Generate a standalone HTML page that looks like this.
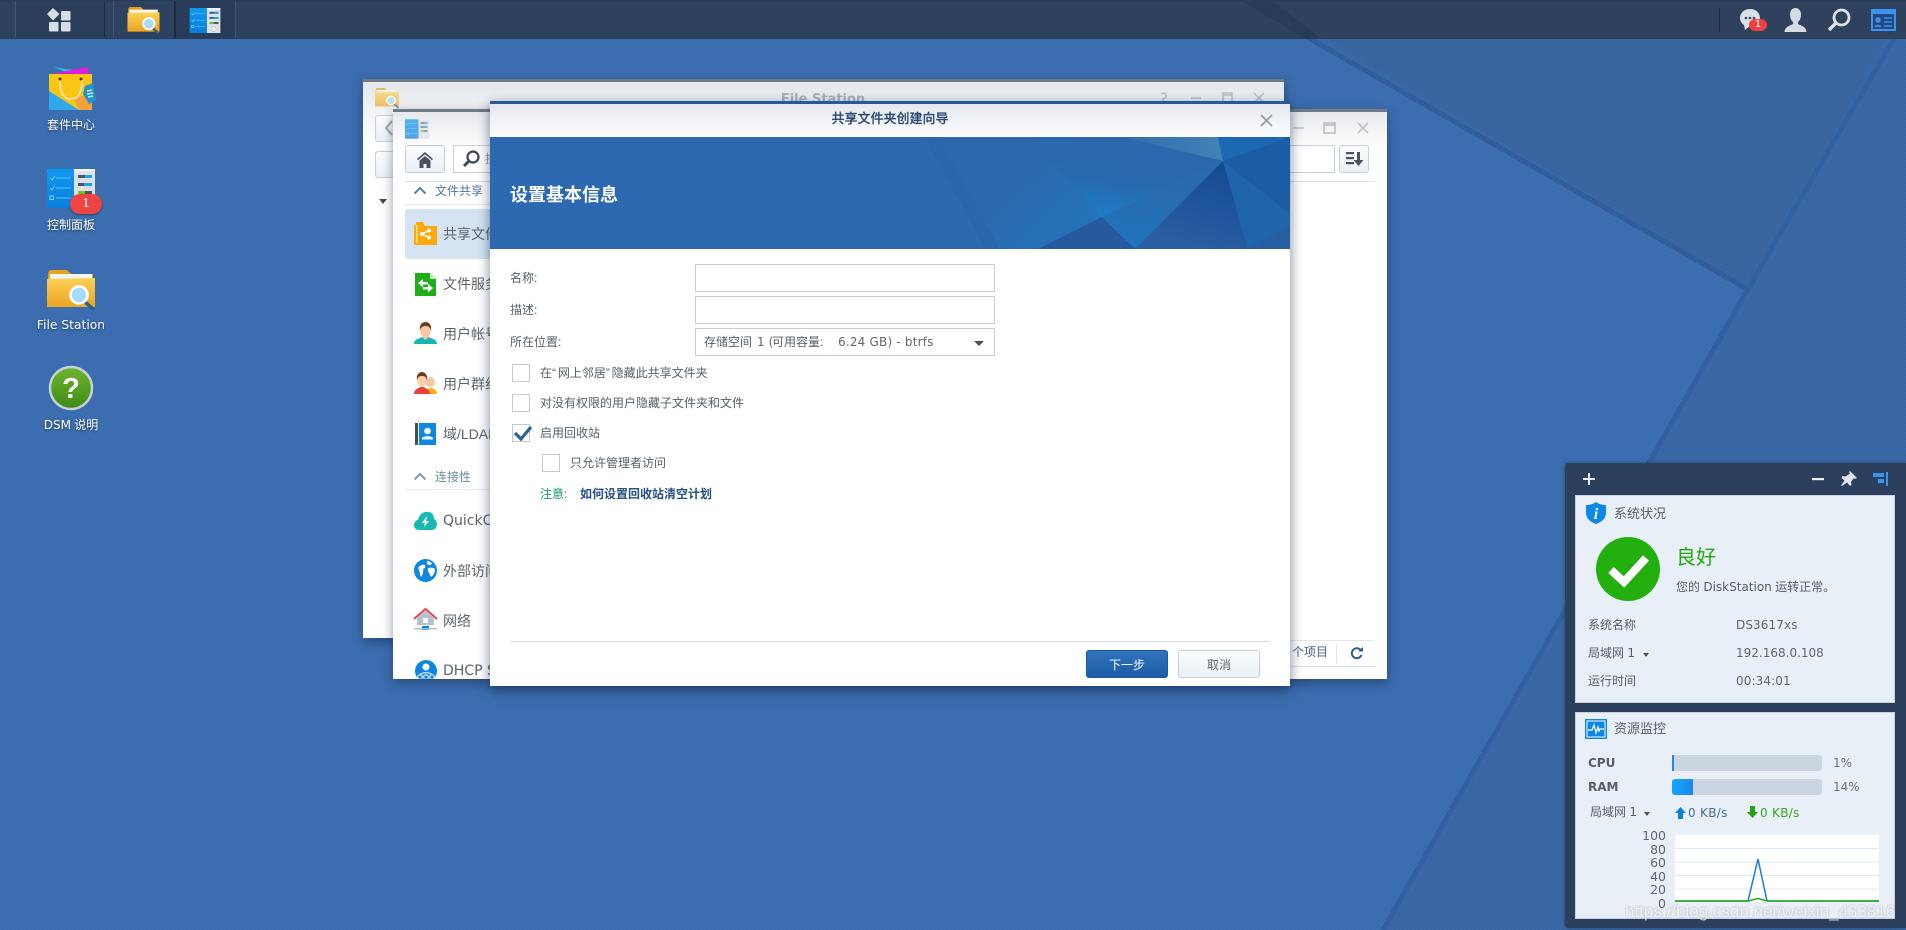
<!DOCTYPE html>
<html lang="zh"><head><meta charset="utf-8"><title>DSM</title>
<style>
html,body{margin:0;padding:0;width:1906px;height:930px;overflow:hidden;background:#3c6fb1}
body{position:relative;font-family:"DejaVu Sans","Noto Sans CJK SC",sans-serif;font-size:12px;color:#555e68}
.a{position:absolute}
.t{position:absolute;white-space:nowrap;line-height:16px;height:16px}
.zh{font-family:"Liberation Sans","Noto Sans CJK SC",sans-serif}
.d{color:#fff;width:120px;text-align:center;text-shadow:0 1px 2px rgba(0,0,0,.5);left:11px}
.win{position:absolute;background:#fff;overflow:hidden;box-shadow:0 4px 10px rgba(10,30,60,.45)}
.inp{position:absolute;box-sizing:border-box;border:1px solid #c5cedb;background:#fff}
.cb{position:absolute;box-sizing:border-box;width:18px;height:18px;border:1px solid #c3c9d2;background:#fff}
.btn{position:absolute;box-sizing:border-box;border:1px solid #c6d0db;border-radius:3px;background:linear-gradient(#fafcfd,#eaf0f5)}
.side{font-size:14px;color:#5c636b}
.v{font-family:"DejaVu Sans",sans-serif;font-size:12px;letter-spacing:.1px;color:#5f6772}
svg{position:absolute;overflow:visible}
</style></head><body>

<!-- wallpaper -->
<svg class="a" style="left:0;top:0" width="1906" height="930" viewBox="0 0 1906 930">
<rect width="1906" height="930" fill="#3c6fb1"/>
<polygon points="1240,0 1906,0 1906,930 1380,930 1747,287" fill="#3a69a8"/>
<polygon points="1262,0 1905,0 1751,290" fill="#3a66a3"/>
<polyline points="1242,0 1747,289" fill="none" stroke="#315e9c" stroke-width="5"/>
<polyline points="1899,30 1749,287 1383,930" fill="none" stroke="#3261a3" stroke-width="5"/>
</svg>
<div class="a" style="left:0;top:0;width:1906px;height:930px;background:repeating-conic-gradient(rgba(0,0,0,.025) 0 25%,transparent 0 50%) 0 0/4px 4px"></div>

<!-- taskbar -->
<div class="a" style="left:0;top:0;width:1906px;height:39px;background:linear-gradient(#263a56 0,#2e425e 6%,#2e425e 100%);border-bottom:1px solid #2a3e5a;box-sizing:border-box"></div>
<svg class="a" style="left:0;top:0" width="1906" height="39"><polygon points="1240,0 1272,0 1320,38 1304,38" fill="#293c57"/></svg>
<div class="a" style="left:15px;top:1px;width:88px;height:37px;background:#2b3f5b;border-left:1px solid #46586f;border-right:1px solid #1c2b40"></div>
<div class="a" style="left:113px;top:1px;width:60px;height:37px;background:#2d4260;border-left:1px solid #46586f;border-right:1px solid #1c2b40"></div>
<div class="a" style="left:175px;top:1px;width:59px;height:37px;background:#283b58;border-left:1px solid #1c2b40;border-right:1px solid #46586f"></div>
<div class="a" style="left:1719px;top:8px;width:1px;height:24px;background:#1d2d44"></div>

<svg width="0" height="0" style="position:absolute">
<defs>
<linearGradient id="gf" x1="0" y1="0" x2="0" y2="1"><stop offset="0" stop-color="#fcd156"/><stop offset="1" stop-color="#eda423"/></linearGradient>
<linearGradient id="gb" x1="0" y1="0" x2="0" y2="1"><stop offset="0" stop-color="#1097ee"/><stop offset="1" stop-color="#0a80dc"/></linearGradient>
<linearGradient id="gg" x1="0" y1="0" x2="0" y2="1"><stop offset="0" stop-color="#6db52e"/><stop offset="1" stop-color="#3f8a17"/></linearGradient>
<linearGradient id="g1" gradientUnits="userSpaceOnUse" x1="1040" y1="150" x2="1102" y2="217"><stop offset="0" stop-color="#2c68ae"/><stop offset="1" stop-color="#2474bb"/></linearGradient>
<linearGradient id="g2" gradientUnits="userSpaceOnUse" x1="1120" y1="140" x2="1108" y2="215"><stop offset="0" stop-color="#2b67ad"/><stop offset=".55" stop-color="#2769b0"/><stop offset="1" stop-color="#1e7cc4"/></linearGradient>
<linearGradient id="g3" gradientUnits="userSpaceOnUse" x1="1150" y1="185" x2="1135" y2="249"><stop offset="0" stop-color="#2a6bb0"/><stop offset="1" stop-color="#1f74bd"/></linearGradient>
<linearGradient id="g4" gradientUnits="userSpaceOnUse" x1="1223" y1="161" x2="1200" y2="249"><stop offset="0" stop-color="#144a90"/><stop offset="1" stop-color="#2a5ea3"/></linearGradient>
<linearGradient id="g5" gradientUnits="userSpaceOnUse" x1="1123" y1="137" x2="1218" y2="150"><stop offset="0" stop-color="#2f6eae"/><stop offset="1" stop-color="#4181b6"/></linearGradient>
<symbol id="fold" viewBox="0 0 48 42">
<path d="M1 6Q1 0 4 0H20L24 4H46V12H1Z" fill="#e7a21f"/>
<rect x="3" y="4" width="42" height="7" fill="#f4f3ee"/>
<path d="M0 9L48 8V37H0Z" fill="url(#gf)"/>
<line x1="37" y1="31" x2="47" y2="40" stroke="#2f6088" stroke-width="3.500"/>
<circle cx="32" cy="25" r="8.500" fill="#a5dbff" stroke="#fff" stroke-width="2.600"/>
</symbol>
<symbol id="cp" viewBox="0 0 48 39">
<rect width="27" height="39" fill="url(#gb)"/>
<rect x="27" width="21" height="39" fill="#dde2e8"/><rect x="27" width="21" height="2" fill="#f4f6f8"/>
<g stroke="#5cc2ff" stroke-width="1"><path d="M9 9H24M9 19H24M9 29H24"/></g>
<rect x="3" y="27" width="3.500" height="3.500" fill="none" stroke="#7dd0ff"/>
<path d="M3 9l2 2 3-4M3 19l2 2 3-4" fill="none" stroke="#7dd0ff"/>
<rect x="31" y="6" width="14" height="3" fill="#4d5560"/><rect x="38" y="6" width="7" height="3" fill="#1ba7e8"/>
<rect x="31" y="14" width="14" height="3" fill="#4d5560"/><rect x="37" y="14" width="8" height="3" fill="#1ba7e8"/>
<rect x="31" y="22" width="14" height="3" fill="#4d5560"/><rect x="31" y="22" width="7" height="3" fill="#6cc61a"/>
<circle cx="37.500" cy="33" r="4" fill="#f1f3f5" stroke="#b6bdc6"/>
</symbol>
</defs>
</svg>

<!-- taskbar icons -->
<svg style="left:47px;top:8px" width="24" height="24" viewBox="0 0 24 24" fill="#d7dde5">
<polygon points="6,0 12.500,6 6,12.500 0,6"/><rect x="14" y="3" width="9.500" height="9.500" rx="1"/><rect x="2" y="14" width="9.500" height="9.500" rx="1"/><rect x="14" y="14" width="9.500" height="9.500" rx="1"/>
</svg>
<svg style="left:127px;top:7px" width="33" height="28"><use href="#fold" width="33" height="28"/></svg>
<svg style="left:189px;top:8px" width="32" height="25"><use href="#cp" width="32" height="25"/></svg>

<!-- tray -->
<svg style="left:1739px;top:8px" width="24" height="24" viewBox="0 0 24 24">
<path d="M11 1C5 1 1 5 1 10c0 3 2 6 4 7l1 5 5-4c6 0 10-4 10-8 0-5-4-9-10-9z" fill="#d9e0e8"/>
<circle cx="7" cy="10" r="1.300" fill="#33465f"/><circle cx="11" cy="10" r="1.300" fill="#33465f"/><circle cx="15" cy="10" r="1.300" fill="#33465f"/>
</svg>
<div class="a" style="left:1749px;top:19px;width:18px;height:12px;background:#ef3f3f;border-radius:6px;color:#fff;font-size:10px;line-height:12px;text-align:center">1</div>
<svg style="left:1784px;top:8px" width="23" height="24" viewBox="0 0 23 24"><path d="M11.500 0c3.500 0 5.500 3 5.500 6.500 0 3-1 6-3 7.500v2c2 1.500 8 2 8.500 8H.5c.5-6 6.500-6.500 8.500-8v-2c-2-1.500-3-4.500-3-7.500C6 3 8 0 11.500 0z" fill="#d5dbe3"/></svg>
<svg style="left:1827px;top:8px" width="24" height="24" viewBox="0 0 24 24" fill="none"><circle cx="14.500" cy="9.500" r="7.500" stroke="#dde3ea" stroke-width="2.800"/><line x1="8.500" y1="15.500" x2="2" y2="22" stroke="#dde3ea" stroke-width="3.400"/></svg>
<svg style="left:1871px;top:9px" width="25" height="22" viewBox="0 0 25 22"><rect x="1" y="1" width="23" height="20" fill="#24497d" stroke="#3c92ef" stroke-width="2"/><rect x="1" y="1" width="23" height="4" fill="#3c92ef"/><circle cx="7" cy="11" r="2.800" fill="#3c92ef"/><path d="M3.500 18c0-3 7-3 7 0z" fill="#3c92ef"/><path d="M13 9h8M13 13h8M13 17h8" stroke="#3c92ef" stroke-width="1.500"/></svg>

<!-- desktop icons -->
<svg style="left:49px;top:66px" width="46" height="46" viewBox="0 0 46 46">
<path d="M5 1l11 2 15 2-8 4z" fill="#23c3e8"/>
<polygon points="6,7 39,1 40,8 12,11" fill="#dd1ee0"/>
<polygon points="0,8 43,8 43,44 0,44" fill="#f9c612"/>
<polygon points="0,25 30,44 0,44" fill="#2fa8ee"/>
<polygon points="24,32 43,28 43,44 30,44" fill="#f0a23c"/>
<path d="M11 14c0 14 4 19 11 19s11-5 11-19" fill="none" stroke="#f4dfa4" stroke-width="2"/>
<circle cx="11" cy="13" r="1.500" fill="#4b3a10"/><circle cx="32" cy="13" r="1.500" fill="#4b3a10"/>
<polygon points="36,20 44,17 47,34 40,38 34,28" fill="#2295c6"/>
<path d="M38 25l5-1M38 28l6-1M39 31l5-1" stroke="#e5f6fc" stroke-width="1.300"/>
</svg>
<div class="t d zh" style="top:117px;font-size:12px">套件中心</div>
<svg style="left:47px;top:169px" width="48" height="39"><use href="#cp" width="48" height="39"/></svg>
<div class="a" style="left:70px;top:194px;width:32px;height:20px;border-radius:10px;background:#ef4444;color:#fff;text-align:center;font:14px/20px 'Liberation Serif',serif;box-shadow:0 1px 2px rgba(0,0,0,.4)">1</div>
<div class="t d zh" style="top:217px">控制面板</div>
<svg style="left:47px;top:270px" width="48" height="42"><use href="#fold" width="48" height="42"/></svg>
<div class="t d" style="top:317px;font-size:12.300px">File Station</div>
<svg style="left:49px;top:366px" width="44" height="44" viewBox="0 0 44 44"><circle cx="22" cy="22" r="21" fill="url(#gg)" stroke="#c9d0d6" stroke-width="2.500"/><text x="22" y="32" text-anchor="middle" font-family="Liberation Sans,sans-serif" font-weight="700" font-size="29" fill="#fff">?</text></svg>
<div class="t d zh" style="top:417px"><span style="font-family:'DejaVu Sans'">DSM</span> 说明</div>

<!-- File Station window -->
<div class="win" style="left:363px;top:79px;width:921px;height:559px">
<div class="a" style="left:0;top:0;width:921px;height:3px;background:#707b89"></div>
<div class="a" style="left:0;top:3px;width:921px;height:60px;background:linear-gradient(#e4e7eb,#fff)"></div>
<svg style="left:12px;top:9px" width="24" height="21" opacity=".65"><use href="#fold" width="24" height="21"/></svg>
<div class="t" style="left:340px;width:240px;text-align:center;top:13px;font-weight:700;font-size:13px;color:#aab0b6">File Station</div>
<div class="btn" style="left:12px;top:36px;width:30px;height:27px"></div>
<svg style="left:22px;top:41px" width="10" height="16" fill="none"><path d="M7 1L1 8l6 7" stroke="#a0a6ae" stroke-width="2"/></svg>
<div class="btn" style="left:12px;top:72px;width:30px;height:27px"></div>
<div class="a" style="left:16px;top:120px;border:4px solid transparent;border-top:5px solid #444c55"></div>
<svg style="left:788px;top:11px" width="120" height="16" fill="none" stroke="#b8bdc4" stroke-width="1.500">
<path d="M10 4c3-2 6 0 5 3l-3 2v2"/><path d="M40 8h10"/><path d="M72 3h9v10h-9zM72 5h9"/><path d="M103 3l10 10M113 3l-10 10"/></svg>
</div>

<!-- Control panel window -->
<div class="win" style="left:393px;top:109px;width:994px;height:570px">
<div class="a" style="left:0;top:0;width:994px;height:3px;background:#707a86"></div>
<div class="a" style="left:0;top:3px;width:994px;height:36px;background:linear-gradient(#e6e9ed,#fff)"></div>
<svg style="left:12px;top:10px" width="24" height="20" opacity=".7"><use href="#cp" width="24" height="20"/></svg>
<svg style="left:890px;top:11px" width="90" height="16" fill="none" stroke="#b8bdc4" stroke-width="1.500">
<path d="M10 8h11"/><path d="M41 3h11v10h-11zM41 5h11"/><path d="M75 3l10 10M85 3l-10 10"/></svg>
<div class="btn" style="left:12px;top:36px;width:40px;height:28px;border-color:#c3ccd6"></div>
<svg style="left:24px;top:43px" width="16" height="16" viewBox="0 0 16 16" fill="#4a535d"><path d="M8 0L0 7l1 1.200L8 2.200l7 6 1-1.200zM2.500 8.500V16H6.500v-4h3v4h4V8.500L8 4z"/></svg>
<div class="a" style="left:60px;top:36px;width:882px;height:28px;box-sizing:border-box;border:1px solid #c8d0da"></div>
<svg style="left:69px;top:41px" width="18" height="18" fill="none" stroke="#3e4853"><circle cx="11" cy="7" r="5.500" stroke-width="2.200"/><line x1="7" y1="11" x2="2" y2="16" stroke-width="3"/></svg>
<div class="t zh" style="left:92px;top:42px;color:#99a">搜索</div>
<div class="btn" style="left:946px;top:36px;width:30px;height:28px"></div>
<svg style="left:953px;top:42px" width="18" height="16" fill="#4a535d"><rect y="1" width="8" height="2.200"/><rect y="6" width="8" height="2.200"/><rect y="11" width="8" height="2.200"/><path d="M11 1h3v8h3.500l-5 6-5-6H11z"/></svg>
<div class="a" style="left:12px;top:72px;width:970px;height:1px;background:#dbe2ea"></div>
<div class="a" style="left:12px;top:95px;width:380px;height:1px;background:#e5eaf0"></div>
<svg style="left:20px;top:77px" width="14" height="9" fill="none"><path d="M1.500 7.500L7 2l5.500 5.500" stroke="#5f7f9d" stroke-width="2"/></svg>
<div class="t zh" style="left:42px;top:74px;color:#54779a">文件共享</div>
<div class="a" style="left:12px;top:100px;width:180px;height:50px;border-radius:3px;background:#d5e3f3"></div>
<div class="t side zh" style="left:50px;top:117px">共享文件夹</div>
<svg style="left:21px;top:113px" width="23" height="23" viewBox="0 0 23 23"><path d="M0 3V23H23V4H11L9 0H2V3z" fill="#fea90a"/><path d="M2 3v18h1.500V3z" fill="#ffe08f"/><g fill="#fff"><circle cx="8" cy="12" r="2"/><circle cx="15" cy="8.500" r="2"/><circle cx="15" cy="15.500" r="2"/></g><path d="M8 12l7-3.500M8 12l7 3.500" stroke="#fff" stroke-width="1.300"/></svg>
<div class="t side zh" style="left:50px;top:167px">文件服务</div>
<svg style="left:22px;top:164px" width="21" height="23" viewBox="0 0 21 23"><path d="M0 0H15L21 6V23H0Z" fill="#1eae17"/><path d="M15 0v6h6z" fill="#c3edc0"/><path d="M3 10l5-4v3h5v2.500H8v3zM18 15l-5-4v3H8v2.500h5v3z" fill="#fff"/></svg>
<div class="t side zh" style="left:50px;top:217px">用户帐号</div>
<svg style="left:21px;top:213px" width="23" height="23" viewBox="0 0 23 23"><path d="M0 22c0-5 5-5 8-7h7c3 2 8 2 8 7z" fill="#18b6b2"/><ellipse cx="11.500" cy="8" rx="5.500" ry="7.500" fill="#f4c9a3"/><path d="M6 8C5 2 9 0 11.500 0S18 2 17 8c-1-3-3-4-5.500-4S7 5 6 8z" fill="#6b3d1e"/><path d="M8 15l3.500 3 3.500-3v-2H8z" fill="#f4c9a3"/></svg>
<div class="t side zh" style="left:50px;top:267px">用户群组</div>
<svg style="left:21px;top:263px" width="23" height="23" viewBox="0 0 23 23"><path d="M11 22c0-4 3-5 5-6h2c2 1 5 2 5 6z" fill="#f8ae14"/><circle cx="16" cy="10" r="5" fill="#f4c9a3"/><path d="M0 22c0-5 4-5 6-7h4c2 2 6 2 6 7z" fill="#e8413b"/><ellipse cx="8" cy="8" rx="5" ry="6.500" fill="#f7cfa9"/><path d="M3 8C2 2 6 0 8 0s6 2 5 8c-1-3-2-4-5-4S4 5 3 8z" fill="#6a3a1a"/></svg>
<div class="t side zh" style="left:50px;top:317px">域/LDAP</div>
<svg style="left:22px;top:314px" width="21" height="22" viewBox="0 0 21 22"><rect width="3" height="22" fill="#434c58"/><rect x="4" width="17" height="22" fill="#0d89e4"/><circle cx="12.500" cy="8" r="3.300" fill="#fff"/><path d="M7 15.500c0-3 11-3 11 0v1H7z" fill="#fff"/></svg>
<svg style="left:20px;top:363px" width="14" height="9" fill="none"><path d="M1.500 7.500L7 2l5.500 5.500" stroke="#7f9ab3" stroke-width="2"/></svg>
<div class="t zh" style="left:42px;top:360px;color:#6c8ba8">连接性</div>
<div class="a" style="left:12px;top:380px;width:380px;height:1px;background:#e5eaf0"></div>
<div class="t side" style="left:50px;top:404px">QuickConnect</div>
<svg style="left:21px;top:402px" width="23" height="19" viewBox="0 0 23 19"><path d="M5 19C2 19 0 17 0 14c0-3 2-5 4-5 1-5 5-9 10-8 4 0 6 3 6 7 2 1 3 3 3 5 0 4-3 6-5 6z" fill="#18b8b3"/><path d="M13 5l-5 7h3l-1 4 5-6h-3z" fill="#fff"/></svg>
<div class="t side zh" style="left:50px;top:454px">外部访问</div>
<svg style="left:21px;top:450px" width="23" height="23" viewBox="0 0 23 23"><circle cx="11.500" cy="11.500" r="11.500" fill="#0f86e0"/><path d="M4 9c2-3 5-4 7-3 1 2 0 3-2 4 1 3-1 7-2 8-1-1-1-6-3-9zM13 2c2 0 4 1 5 3-2 1-4 1-5 0zM14 9c3-1 6 0 7 1 0 4-2 7-4 8-1-3-4-6-3-9z" fill="#fff"/></svg>
<div class="t side zh" style="left:50px;top:504px">网络</div>
<svg style="left:21px;top:500px" width="23" height="23" viewBox="0 0 23 23"><path d="M3 9L11.500 2 20 9v7H3z" fill="#b5c1cf"/><path d="M0 10L11.500 0 23 10" fill="none" stroke="#e9464a" stroke-width="2"/><rect x="9" y="9" width="5" height="5" fill="#fff"/><rect x="8" y="17" width="7" height="4" fill="#0c83df"/><rect y="19" width="23" height="1.500" fill="#b5c1cf"/></svg>
<div class="t side" style="left:50px;top:554px">DHCP Server</div>
<svg style="left:22px;top:551px" width="22" height="22" viewBox="0 0 22 22"><circle cx="11" cy="11" r="11" fill="#0d86e1"/><circle cx="11" cy="7" r="3.500" fill="#fff"/><path d="M5 15c1-3 11-3 12 0" stroke="#fff" fill="none"/><circle cx="5" cy="17" r="2.300" fill="none" stroke="#fff"/><circle cx="11" cy="17" r="2.300" fill="none" stroke="#fff"/><circle cx="17" cy="17" r="2.300" fill="none" stroke="#fff"/></svg>
<div class="a" style="left:670px;top:531px;width:312px;height:1px;background:#e1e7ee"></div>
<div class="a" style="left:670px;top:557px;width:312px;height:1px;background:#d5dee8"></div>
<div class="t zh" style="left:899px;top:535px;color:#41648c">个项目</div>
<div class="a" style="left:943px;top:535px;width:1px;height:19px;background:#dde3ea"></div>
<svg style="left:957px;top:538px" width="13" height="13" viewBox="0 0 13 13" fill="none"><path d="M11 3.500A5 5 0 1 0 11.500 8" stroke="#2f5c93" stroke-width="2"/><path d="M8 4.500h5V0z" fill="#2f5c93"/></svg>
</div>

<!-- Wizard dialog -->
<div class="win" style="left:490px;top:101px;width:800px;height:585px;box-shadow:0 4px 12px rgba(10,30,60,.55)">
<div class="a" style="left:0;top:0;width:800px;height:3px;background:#265a96"></div>
<div class="a" style="left:0;top:3px;width:800px;height:33px;background:linear-gradient(#e4e8ef,#fdfdfe)"></div>
<div class="t zh" style="left:0;width:800px;text-align:center;top:10px;font-size:13px;color:#2c4b72;font-weight:500;-webkit-text-stroke:.2px #2c4b72">共享文件夹创建向导</div>
<svg style="left:770px;top:13px" width="13" height="13" fill="none" stroke="#8e97a2" stroke-width="1.600"><path d="M1 1l11 11M12 1L1 12"/></svg>
<svg style="left:0;top:36px" width="800" height="112" viewBox="490 137 800 112">
<rect x="490" y="137" width="800" height="112" fill="#2c69b1"/>
<polygon points="925,137 939,137 1000,249 985,249" fill="#2a66ad"/>
<polygon points="939,137 1000,249 1038,249 1102,217 1031,137" fill="url(#g1)"/>
<polygon points="1031,137 1123,137 1223,161 1102,217" fill="url(#g2)"/>
<polygon points="1123,137 1218,137 1223,161" fill="url(#g5)"/>
<polygon points="1218,137 1290,137 1223,161" fill="#1c68b1"/>
<polygon points="1102,217 1223,161 1135,249" fill="url(#g3)"/>
<polygon points="1038,249 1102,217 1135,249" fill="#27599e"/>
<polygon points="1223,161 1135,249 1248,249" fill="url(#g4)"/>
<polygon points="1223,161 1248,249 1290,227 1290,214" fill="#1e65ab"/>
<polygon points="1223,161 1290,137 1290,214" fill="#1a5da4"/>
<polygon points="1248,249 1290,249 1290,227" fill="#255f9f"/>
</svg>
<div class="t zh" style="left:20px;top:84px;height:20px;line-height:20px;font-size:18px;font-weight:700;color:#fff">设置基本信息</div>
<div class="t zh" style="left:20px;top:169px">名称:</div>
<div class="t zh" style="left:20px;top:201px">描述:</div>
<div class="t zh" style="left:20px;top:233px">所在位置:</div>
<div class="inp" style="left:205px;top:163px;width:300px;height:28px"></div>
<div class="inp" style="left:205px;top:195px;width:300px;height:28px"></div>
<div class="inp" style="left:205px;top:227px;width:300px;height:28px"></div>
<div class="t zh" style="left:214px;top:233px">存储空间</div>
<div class="t v" style="left:267px;top:233px">1 (</div>
<div class="t zh" style="left:282px;top:233px">可用容量:</div>
<div class="t v" style="left:348px;top:233px;letter-spacing:.2px">6.24 GB) - btrfs</div>
<div class="a" style="left:484px;top:240px;border:5.500px solid transparent;border-top:5.500px solid #4b535d"></div>
<div class="cb" style="left:22px;top:263px"></div>
<div class="t zh" style="left:50px;top:264px">在<span style="letter-spacing:1.800px">“</span>网上邻居<span style="letter-spacing:1.800px">”</span>隐藏此共享文件夹</div>
<div class="cb" style="left:22px;top:293px"></div>
<div class="t zh" style="left:50px;top:294px">对没有权限的用户隐藏子文件夹和文件</div>
<div class="cb" style="left:22px;top:323px"></div>
<svg style="left:23px;top:323px" width="20" height="18" fill="none"><path d="M2 9l6 6L18 3" stroke="#2c5f9e" stroke-width="3.200"/></svg>
<div class="t zh" style="left:50px;top:324px">启用回收站</div>
<div class="cb" style="left:52px;top:353px"></div>
<div class="t zh" style="left:80px;top:354px">只允许管理者访问</div>
<div class="t zh" style="left:50px;top:385px;color:#139a64">注意:</div>
<div class="t zh" style="left:90px;top:385px;color:#254f85;font-weight:700">如何设置回收站清空计划</div>
<div class="a" style="left:20px;top:540px;width:760px;height:1px;background:#d6dae0"></div>
<div class="btn" style="left:596px;top:549px;width:82px;height:28px;border-color:#2058a0;background:linear-gradient(#3173bd,#1d5ca7)"></div>
<div class="t zh" style="left:596px;width:82px;text-align:center;top:556px;color:#fff">下一步</div>
<div class="btn" style="left:688px;top:549px;width:82px;height:28px"></div>
<div class="t zh" style="left:688px;width:82px;text-align:center;top:556px;color:#5f666e">取消</div>
</div>

<!-- Widget panel -->
<div class="a" style="left:1565px;top:463px;width:341px;height:465px;background:#2c405d;border-radius:3px 0 0 3px;box-shadow:0 0 4px rgba(20,40,70,.5)"></div>
<svg style="left:1582px;top:472px" width="14" height="14" fill="none" stroke="#eaeef2" stroke-width="2"><path d="M7 1v12M1 7h12"/></svg>
<svg style="left:1811px;top:472px" width="14" height="14"><rect x="1" y="6" width="12" height="2.200" fill="#eaeef2"/></svg>
<svg style="left:1841px;top:471px" width="16" height="16" viewBox="0 0 16 16" fill="#dfe4ea"><path d="M9 0l7 7-2 1-1-1-3 4 .5 3-1.500 1-3-3.500L1 15l-1-.5 3.500-5L.5 7l1-2 3 .5L9 2.500 8 1z"/></svg>
<svg style="left:1873px;top:472px" width="16" height="15" fill="#3a94f0"><rect x="0" y="1" width="11" height="4"/><rect x="5" y="7" width="6" height="4"/><rect x="13" y="0" width="2" height="14"/></svg>

<div class="a" style="left:1575px;top:495px;width:320px;height:208px;background:#e9eff7;border:1px solid #c9d1dc;box-sizing:border-box"></div>
<svg style="left:1586px;top:502px" width="20" height="22" viewBox="0 0 20 22"><path d="M10 0c3 2 6 3 10 3v8c0 5-4 9-10 11C4 20 0 16 0 11V3c4 0 7-1 10-3z" fill="#0c88e6"/><text x="10" y="17" text-anchor="middle" font-family="Liberation Serif,serif" font-style="italic" font-weight="700" font-size="16" fill="#fff">i</text></svg>
<div class="t zh" style="left:1614px;top:506px;font-size:13px;color:#565f69">系统状况</div>
<svg style="left:1596px;top:537px" width="64" height="64" viewBox="0 0 64 64"><circle cx="32" cy="32" r="32" fill="#23b00e"/><path d="M15 33l13 12 22-24" fill="none" stroke="#fff" stroke-width="8"/></svg>
<div class="t zh" style="left:1676px;top:547px;font-size:20px;height:22px;line-height:22px;color:#23a90f">良好</div>
<div class="t zh" style="left:1676px;top:579px;color:#555e68">您的 <span style="font-family:'DejaVu Sans';font-size:12px">DiskStation</span> 运转正常。</div>
<div class="t zh" style="left:1588px;top:617px">系统名称</div>
<div class="t v" style="left:1736px;top:617px">DS3617xs</div>
<div class="t zh" style="left:1588px;top:645px">局域网 <span style="font-family:'DejaVu Sans'">1</span></div>
<div class="a" style="left:1643px;top:653px;border:3.500px solid transparent;border-top:4px solid #4a525c"></div>
<div class="t v" style="left:1736px;top:645px;letter-spacing:0">192.168.0.108</div>
<div class="t zh" style="left:1588px;top:673px">运行时间</div>
<div class="t v" style="left:1736px;top:673px">00:34:01</div>

<div class="a" style="left:1575px;top:712px;width:320px;height:207px;background:#e9eff7;border:1px solid #c9d1dc;box-sizing:border-box"></div>
<svg style="left:1585px;top:719px" width="22" height="20" viewBox="0 0 22 20"><rect width="22" height="20" fill="#0c86e3"/><rect x="2" y="2" width="18" height="16" fill="none" stroke="#fff" stroke-width="1"/><path d="M3 11h4l2-5 2 8 2-6 1 4 1-2h4" fill="none" stroke="#fff" stroke-width="1.200"/></svg>
<div class="t zh" style="left:1614px;top:721px;font-size:13px;color:#565f69">资源监控</div>
<div class="t" style="left:1588px;top:755px;font-weight:700;color:#555e68">CPU</div>
<div class="a" style="left:1672px;top:755px;width:150px;height:16px;border-radius:3px;background:#cbd5e0"></div>
<div class="a" style="left:1672px;top:755px;width:2px;height:16px;background:#1b88ea"></div>
<div class="t" style="left:1833px;top:755px;color:#6a727c">1%</div>
<div class="t" style="left:1588px;top:779px;font-weight:700;color:#555e68">RAM</div>
<div class="a" style="left:1672px;top:779px;width:150px;height:16px;border-radius:3px;background:#cbd5e0"></div>
<div class="a" style="left:1672px;top:779px;width:21px;height:16px;border-radius:3px 0 0 3px;background:linear-gradient(90deg,#15a4ff,#1c88ea)"></div>
<div class="t" style="left:1833px;top:779px;color:#6a727c">14%</div>
<div class="t zh" style="left:1590px;top:804px">局域网 <span style="font-family:'DejaVu Sans'">1</span></div>
<div class="a" style="left:1644px;top:812px;border:3.500px solid transparent;border-top:4px solid #4a525c"></div>
<svg style="left:1675px;top:807px" width="11" height="12" fill="#0c7fd6"><path d="M5.500 0L11 6H8v6H3V6H0z"/></svg>
<div class="t" style="left:1688px;top:805px;color:#3f6f9f;letter-spacing:.3px">0 KB/s</div>
<svg style="left:1747px;top:806px" width="11" height="12" fill="#23a114"><path d="M5.500 12L11 6H8V0H3v6H0z"/></svg>
<div class="t" style="left:1760px;top:805px;color:#3aa520;letter-spacing:.3px">0 KB/s</div>
<div class="a" style="left:1675px;top:835px;width:204px;height:67px;background:#fff"></div>
<svg style="left:1675px;top:835px" width="204" height="68" viewBox="1675 835 204 68" fill="none">
<path d="M1675 848.500H1879M1675 862H1879M1675 875.500H1879M1675 889H1879" stroke="#dde9f3"/>
<path d="M1675 901H1748L1758 859L1767 901H1879" stroke="#1a7fd3" stroke-width="1.500"/>
<path d="M1675 901H1748L1758 898.500L1767 901H1879" stroke="#27ab17" stroke-width="1.500"/>
</svg>
<div class="a" style="left:1630px;top:829px;width:36px;text-align:right;font-size:12.500px;line-height:13.500px;color:#5f6772">100<br>80<br>60<br>40<br>20<br>0</div>
<div class="t" style="left:1625px;top:903px;width:270px;overflow:hidden;font-family:'Liberation Sans',sans-serif;font-size:17px;height:20px;line-height:18px;color:rgba(255,255,255,.72);text-shadow:0 0 2px rgba(110,120,130,.55)">https://blog.csdn.net/weixin_43381677</div>

</body></html>
